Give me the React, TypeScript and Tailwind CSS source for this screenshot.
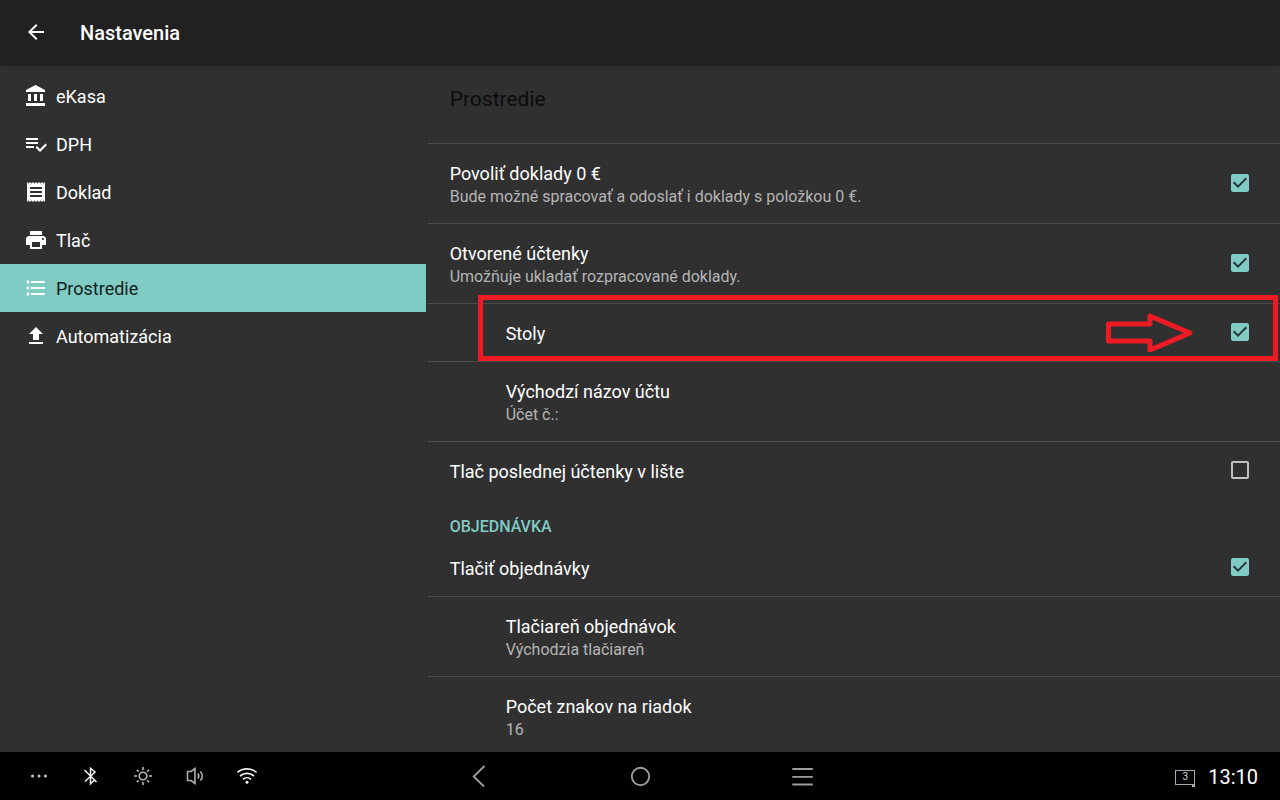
import React, { useState } from 'react';
import {
  MdArrowBack,
  MdFileUpload,
  MdFormatListBulleted,
  MdPrint,
  MdReceipt,
} from 'react-icons/md';

type Section = {
  id: string;
  label: string;
  icon: React.ReactNode;
};

const bankIcon = (
  <svg width="24" height="24" viewBox="0 0 24 24" fill="currentColor">
    <path d="M4 10v7h3v-7H4zm6 0v7h3v-7h-3zM2 22h19v-3H2v3zm14-12v7h3v-7h-3zm-4.5-9L2 6v2h19V6l-9.5-5z" />
  </svg>
);

const listCheckIcon = (
  <svg width="24" height="24" viewBox="0 0 24 24" fill="currentColor">
    <path d="M14 10H2v2h12v-2zm0-4H2v2h12V6zM2 16h8v-2H2v2zm19.5-4.5L23 13l-6.99 7-4.51-4.5L13 14l3.01 3 5.49-5.5z" />
  </svg>
);

const sections: Section[] = [
  { id: 'ekasa', label: 'eKasa', icon: bankIcon },
  { id: 'dph', label: 'DPH', icon: listCheckIcon },
  { id: 'doklad', label: 'Doklad', icon: <MdReceipt size={24} /> },
  { id: 'tlac', label: 'Tlač', icon: <MdPrint size={24} /> },
  { id: 'prostredie', label: 'Prostredie', icon: <MdFormatListBulleted size={24} /> },
  { id: 'automatizacia', label: 'Automatizácia', icon: <MdFileUpload size={24} /> },
];

type RowProps = {
  title: string;
  summary?: string;
  indent?: boolean;
  divider?: boolean;
  children?: React.ReactNode;
};

function rowClass(indent?: boolean, divider = true) {
  return `relative flex w-full shrink-0 items-center pt-[18px] pb-[15px] pr-[31px] text-left ${
    indent ? 'pl-[79px]' : 'pl-[23px]'
  } ${divider ? 'border-b border-[#4a4a4a]' : ''}`;
}

function RowText({ title, summary }: { title: string; summary?: string }) {
  return (
    <span className="flex-1">
      <span className="block text-[18px] leading-6 text-white">{title}</span>
      {summary && <span className="block text-[16px] leading-[22px] text-[#b5b5b5]">{summary}</span>}
    </span>
  );
}

function CheckRow({ title, summary, indent, divider, children, checked }: RowProps & { checked: boolean }) {
  const [on, setOn] = useState(checked);
  return (
    <label className={rowClass(indent, divider)}>
      <RowText title={title} summary={summary} />
      <span className="-mt-1 grid size-[18px]">
        <input
          type="checkbox"
          checked={on}
          onChange={(e) => setOn(e.target.checked)}
          className="peer col-start-1 row-start-1 size-[18px] appearance-none rounded-[2px] border-2 border-[#c1c1c1] checked:border-[#80cbc4] checked:bg-[#80cbc4]"
        />
        <svg
          viewBox="0 0 18 18"
          className="pointer-events-none invisible col-start-1 row-start-1 size-[18px] peer-checked:visible"
          fill="none"
          stroke="#263635"
          strokeWidth="2"
        >
          <path d="M2.7 8.3 7 12.600l8.300-8.300" />
        </svg>
      </span>
      {children}
    </label>
  );
}

function ValueRow({ title, summary, indent }: RowProps) {
  return (
    <button type="button" className={rowClass(indent)}>
      <RowText title={title} summary={summary} />
    </button>
  );
}

// Red frame with an arrow that points at the checkbox of its row
function Highlight() {
  return (
    <span className="pointer-events-none absolute -top-[9px] right-[2px] bottom-0 left-[51px] z-10 flex items-end justify-end border-5 border-[#ed1c24] pr-[79px] pb-1">
      <svg width="90" height="40" viewBox="0 0 90 40" fill="none" stroke="#ed1c24" strokeWidth="5" strokeLinejoin="round">
        <path d="M4.500 12H46V4l40 17-40 17V29H4.500z" />
      </svg>
    </span>
  );
}

function SystemBar() {
  return (
    <footer className="grid h-12 shrink-0 grid-cols-[1fr_auto_1fr] items-center bg-black text-[#9e9e9e]">
      <div className="flex items-center gap-7 pl-[27px]">
        <button type="button" aria-label="Viac">
          <svg width="24" height="24" viewBox="0 0 24 24" fill="#c8c8c8">
            <circle cx="5.500" cy="12" r="1.500" />
            <circle cx="12" cy="12" r="1.500" />
            <circle cx="18.500" cy="12" r="1.500" />
          </svg>
        </button>
        <button type="button" aria-label="Bluetooth">
          <svg width="24" height="24" viewBox="0 0 24 24" fill="none" stroke="#f2f2f2" strokeWidth="1.500">
            <path d="M5.500 6 17.500 18M6 17.500 16 8l-4.500-3.700v15.400L15.500 16" />
          </svg>
        </button>
        <button type="button" aria-label="Jas">
          <svg width="24" height="24" viewBox="0 0 24 24" fill="none" stroke="#b8b8b8" strokeWidth="1.600">
            <circle cx="12" cy="12" r="3.800" />
            <path d="M12 3v3M12 18v3M3 12h3M18 12h3M5.800 5.800l2 2M16.200 16.200l2 2M5.800 18.200l2-2M16.200 7.800l2-2" />
          </svg>
        </button>
        <button type="button" aria-label="Hlasitosť">
          <svg width="24" height="24" viewBox="0 0 24 24" fill="none" stroke="#b0b0b0" strokeWidth="1.600">
            <path d="M8 7.500H4.500v9H8l4 3v-15zM14.800 9.500c1.200 1.500 1.200 3.500 0 5M17.300 7.500c2.700 2.700 2.700 6.300 0 9" />
          </svg>
        </button>
        <button type="button" aria-label="Wi-Fi">
          <svg width="24" height="24" viewBox="0 0 24 24" fill="none" stroke="#f2f2f2" strokeWidth="1.700">
            <path d="M2.500 8.300c5.500-4.500 13.500-4.500 19 0M5 12c4-3.600 10-3.600 14 0M8 15.300c2.300-2.100 5.700-2.100 8 0" />
            <circle cx="12" cy="18.300" r="1.500" fill="#f2f2f2" stroke="none" />
          </svg>
        </button>
      </div>
      <div className="flex items-center gap-[138px]">
        <button type="button" aria-label="Späť">
          <svg width="24" height="24" viewBox="0 0 24 24" fill="none" stroke="currentColor" strokeWidth="1.800">
            <path d="M18.500 2 7.700 12.500l10.300 10" />
          </svg>
        </button>
        <button type="button" aria-label="Domov">
          <svg width="24" height="24" viewBox="0 0 24 24" fill="none" stroke="currentColor" strokeWidth="1.900">
            <circle cx="12.500" cy="12.500" r="8.700" />
          </svg>
        </button>
        <button type="button" aria-label="Ponuka">
          <svg width="24" height="24" viewBox="0 0 24 24" fill="none" stroke="currentColor" strokeWidth="1.900">
            <path d="M2.300 5h20.500M2.300 12.900h20.500M2.300 20.500h20.500" />
          </svg>
        </button>
      </div>
      <div className="flex items-center justify-end gap-[13px] pr-[22px]">
        <span className="relative mt-[2px] flex h-[15px] w-5 items-center justify-center border border-[#a8a8a8] text-[10px] leading-none text-[#d8d8d8]">
          3
          <span className="absolute -right-px -bottom-[3px] size-[3px] bg-[#a8a8a8]" />
        </span>
        <time className="pt-[2px] text-[20px] leading-6 text-white">13:10</time>
      </div>
    </footer>
  );
}

export default function App() {
  const [active, setActive] = useState('prostredie');

  return (
    <div className="flex h-screen flex-col overflow-hidden bg-[#303030] font-[Roboto,sans-serif] text-white">
      <header className="z-10 flex h-16 shrink-0 items-center gap-8 bg-[#212121] pl-6 shadow-[0_1px_3px_rgba(0,0,0,0.5)]">
        <button type="button" aria-label="Späť">
          <MdArrowBack size={24} />
        </button>
        <h1 className="pt-[2px] text-[20px] leading-6 font-medium">Nastavenia</h1>
      </header>

      <div className="flex min-h-0 flex-1">
        <nav className="w-1/3 border-r border-[#2b2b2b] pt-2">
          {sections.map((s) => (
            <button
              key={s.id}
              type="button"
              onClick={() => setActive(s.id)}
              className={`flex h-12 w-full items-center gap-2 pl-6 text-[18px] leading-6 ${
                s.id === active ? 'bg-[#80cbc4]' : ''
              }`}
            >
              {s.icon}
              <span className={s.id === active ? 'pt-[2px] text-[#12201f]' : 'pt-[2px] text-white'}>{s.label}</span>
            </button>
          ))}
        </nav>

        <main className="flex flex-1 flex-col overflow-hidden">
          <h2 className="h-20 shrink-0 border-b border-[#4a4a4a] pt-[21px] pl-[23px] text-[21px] leading-7 text-[#0c0c0c]">
            Prostredie
          </h2>
          <CheckRow
            title="Povoliť doklady 0 €"
            summary="Bude možné spracovať a odoslať i doklady s položkou 0 €."
            checked
          />
          <CheckRow title="Otvorené účtenky" summary="Umožňuje ukladať rozpracované doklady." checked />
          <CheckRow title="Stoly" indent checked>
            <Highlight />
          </CheckRow>
          <ValueRow title="Východzí názov účtu" summary="Účet č.:" indent />
          <CheckRow title="Tlač poslednej účtenky v lište" divider={false} checked={false} />
          <h3 className="h-10 shrink-0 pt-4 pl-[23px] text-[16px] leading-6 font-medium text-[#80cbc4]">OBJEDNÁVKA</h3>
          <CheckRow title="Tlačiť objednávky" checked />
          <ValueRow title="Tlačiareň objednávok" summary="Východzia tlačiareň" indent />
          <ValueRow title="Počet znakov na riadok" summary="16" indent />
        </main>
      </div>

      <SystemBar />
    </div>
  );
}
